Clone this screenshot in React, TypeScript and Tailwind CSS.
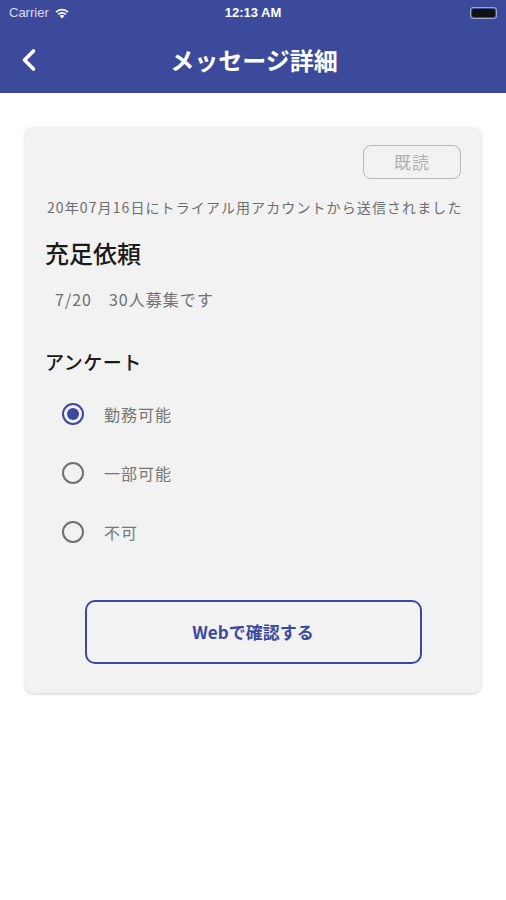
import { ChevronLeft } from 'lucide-react';

const font = { fontFamily: '"Noto Sans CJK JP", "Noto Sans", sans-serif' };

const options = [
  { label: '勤務可能', checked: true },
  { label: '一部可能', checked: false },
  { label: '不可', checked: false },
];

const Radio = ({ checked }: { checked: boolean }) =>
  checked ? (
    <div className="w-[22px] h-[22px] rounded-full border-2 border-[#3b4aa0] flex items-center justify-center">
      <div className="w-[12px] h-[12px] rounded-full bg-[#3b4aa0]" />
    </div>
  ) : (
    <div className="w-[22px] h-[22px] rounded-full border-2 border-[#707070]" />
  );

const App = () => {
  return (
    <div className="w-[506px] h-[900px] bg-white" style={font}>
      {/* Header */}
      <div className="bg-[#3c4a9c] h-[93px] flex flex-col">
        <div className="h-[26px] flex items-center justify-between px-[9px] text-white text-[13px]" style={{ fontFamily: '"Liberation Sans", sans-serif' }}>
          <div className="flex items-center gap-[5px] w-[120px]">
            <span className="opacity-80">Carrier</span>
            <svg width="16" height="12" viewBox="0 0 16 12">
              <path d="M8 11.5 L10.3 8.9 A3.3 3.3 0 0 0 5.7 8.9 Z" fill="white" />
              <path d="M3.6 6.8 A6.3 6.3 0 0 1 12.4 6.8 L11.2 8.1 A4.6 4.6 0 0 0 4.8 8.1 Z" fill="white" />
              <path d="M1.4 4.5 A9.4 9.4 0 0 1 14.6 4.5 L13.4 5.8 A7.7 7.7 0 0 0 2.6 5.8 Z" fill="white" />
            </svg>
          </div>
          <span className="font-bold">12:13 AM</span>
          <div className="w-[120px] flex justify-end">
            <div className="w-[27px] h-[12px] rounded-[3px] border border-white/50 p-[1px]">
              <div className="w-full h-full bg-[#111111] rounded-[2px]" />
            </div>
          </div>
        </div>
        <div className="flex-1 flex items-center relative">
          <ChevronLeft className="absolute left-[11px] text-white" size={36} strokeWidth={2.4} />
          <div className="flex-1 text-center text-white text-[24px] font-bold pl-[2px]">メッセージ詳細</div>
        </div>
      </div>

      {/* Card */}
      <div className="px-[25px] pt-[34px]">
        <div className="bg-[#f2f2f2] rounded-[8px] shadow-[0_1px_3px_rgba(0,0,0,0.2)] px-[20px] pt-[18px] pb-[29px]">
          <div className="flex justify-end">
            <div className="w-[98px] h-[34px] rounded-[8px] border border-[#b8b8b8] flex items-center justify-center text-[17px] tracking-[1px] text-[#b0b0b0]">
              既読
            </div>
          </div>
          <div className="mt-[18px] text-[14px] leading-[20px] tracking-[1.1px] text-[#6e6e6e] pl-[2px] whitespace-nowrap">20年07月16日にトライアル用アカウントから送信されました</div>
          <div className="mt-[20px] text-[24px] leading-[32px] text-[#1a1a1a] font-medium">充足依頼</div>
          <div className="mt-[18px] text-[16px] leading-[24px] tracking-[1px] text-[#707070] pl-[10px]">7/20　30人募集です</div>
          <div className="mt-[37px] text-[19px] leading-[28px] tracking-[0.5px] text-[#1a1a1a] font-medium">アンケート</div>
          <div className="mt-[27px] flex flex-col gap-[37px] pl-[17px]">
            {options.map((o) => (
              <div key={o.label} className="flex items-center gap-[20px] h-[22px]">
                <Radio checked={o.checked} />
                <span className="text-[16px] tracking-[1px] text-[#777777]">{o.label}</span>
              </div>
            ))}
          </div>
          <div className="mt-[57px] flex justify-center">
            <div className="w-[337px] h-[64px] rounded-[10px] border-2 border-[#3b4aa0] flex items-center justify-center text-[17px] font-bold text-[#3b4aa0]">
              Webで確認する
            </div>
          </div>
        </div>
      </div>
    </div>
  );
};

export default App;
